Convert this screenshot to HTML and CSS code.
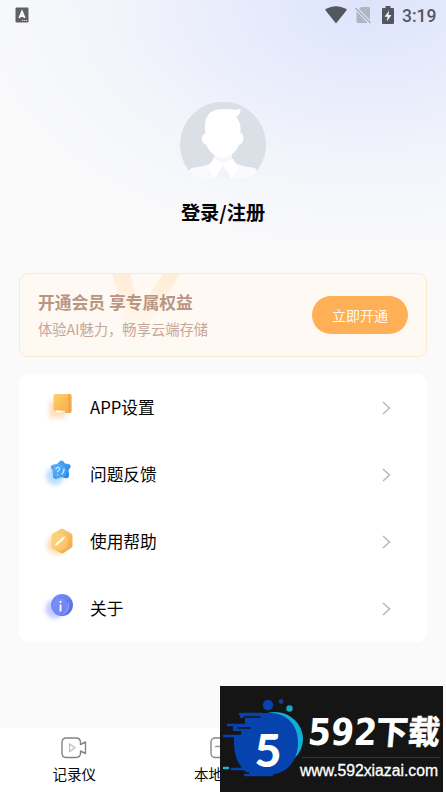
FILE: index.html
```html
<!DOCTYPE html>
<html lang="zh-CN">
<head>
<meta charset="utf-8">
<meta name="viewport" content="width=device-width, initial-scale=1">
<title>登录/注册</title>
<link rel="stylesheet" href="styles.css">
</head>
<body>
<div class="screen">
  <header class="status">
    <svg class="app-badge" width="14" height="16" viewBox="0 0 14 16"><rect x=".5" y=".5" width="13" height="15" rx="1.2" fill="#606167"/><path d="M4.3 11 7 4.6 9.700 11M5.200 9h3.600" fill="none" stroke="#fff" stroke-width="1.800"/><path d="M7 13.500h5" stroke="#ddd" stroke-width="1" stroke-dasharray="1.200 .7"/></svg>
    <div class="status-right">
      <svg class="wifi" width="22" height="18" viewBox="0 0 22 18"><path d="M0 3.800C6-1 16-1 22 3.800L11 17.500z" fill="#55575f"/></svg>
      <svg class="sim" width="16" height="18" viewBox="0 0 16 18"><path d="M6 1h8q1 0 1 1v12L4 3zM1.500 5.300 12.800 17H2.500q-1 0-1-1z" fill="#b2b5c1"/><path d="m.5 2 15 15" stroke="#a5a8b5" stroke-width="1.300"/></svg>
      <svg class="battery" width="12" height="18" viewBox="0 0 12 18"><path d="M3.500 0h5v2H11q1 0 1 1v14q0 1-1 1H1q-1 0-1-1V3q0-1 1-1h2.500z" fill="#55575f"/><path d="M7.200 4.500 2.500 10.700h3L4.800 15.500 9.500 9h-3z" fill="#eef0fc"/></svg>
      <span class="clock">3:19</span>
    </div>
  </header>

  <section class="profile">
    <svg class="avatar" width="86" height="86" viewBox="0 0 86 86">
      <defs>
        <linearGradient id="body" x2="0" y2="1"><stop offset="0" stop-color="#fdfdfe"/><stop offset="1" stop-color="#f8f9fc"/></linearGradient>
      </defs>
      <path d="M9 69A43 43 0 1 1 77 69z" fill="#dae0e6"/>
      <path d="M9 69C10 66 13 65.500 17 65C28 63.500 34 61 34 56V48H52V56C52 61 59 63.500 69 65C73 65.500 76 66 77 69L71 76H15z" fill="url(#body)"/>
      <path d="m34 56-6 9 6 12 9-14zm18 0 6 9-6 12-9-14z" fill="#fff"/>
      <path d="m35 76 8-13 8 13z" fill="#f2f4f9"/>
      <path d="M34 50q9 8 18 0v6q-9 9-18 0z" fill="#f6f7f9"/>
      <path d="M25.500 31C23 12 31 7 45 7C51 7 55 8.500 60.500 7C61 11 58 14 56 15C60 19 61 25 60.500 31C65 32 64.500 41 59 43C56 50 50 55 43 56C35 55 29 50 26.500 43C20.500 41 20.500 33 25.500 31z" fill="#fff"/>
    </svg>
    <h1 class="login">登录/注册</h1>
  </section>

  <section class="vip">
    <svg class="vip-mark" width="70" height="60" viewBox="0 0 70 60"><defs><linearGradient id="vee" x2="0" y2="1"><stop stop-color="#ffecd6"/><stop offset="1" stop-color="#fff9f2"/></linearGradient></defs><path d="M0 0H18L28 34 51 0H68L31 60H18z" fill="url(#vee)"/></svg>
    <div class="vip-text">
      <h2>开通会员 享专属权益</h2>
      <p>体验AI魅力，畅享云端存储</p>
    </div>
    <button class="open" type="button">立即开通</button>
  </section>

  <nav class="menu">
    <a class="row">
      <svg class="icon" width="36" height="36" viewBox="0 0 36 36">
        <defs><linearGradient id="book" x2="1" y2="1"><stop stop-color="#ffd168"/><stop offset="1" stop-color="#f6a64b"/></linearGradient><filter id="soft" x="-50%" y="-50%" width="200%" height="200%"><feGaussianBlur stdDeviation="2.200"/></filter></defs>
        <rect x="8" y="11" width="17" height="17" rx="3" fill="#ffc9a0" opacity=".6" filter="url(#soft)"/>
        <rect x="12.500" y="4" width="18" height="19" rx="2" fill="url(#book)"/><path d="M27 4h2q1.500 0 1.500 2v15q0 2-3.500 2z" fill="#ec9d50" opacity=".55"/><path d="M10 20.500h14V24H12q-2 0-2-3.500z" fill="#ffe0b5"/><path d="M15 21.500h5.500" stroke="#fff" stroke-width="1.600"/>
      </svg>
      <span class="label">APP设置</span><svg class="chev" width="9" height="14" viewBox="0 0 9 14"><path d="m1 1 6.500 6L1 13"/></svg>
    </a>
    <a class="row">
      <svg class="icon" width="36" height="36" viewBox="0 0 36 36">
        <defs><linearGradient id="star" x2="1" y2="1"><stop stop-color="#4eb3fa"/><stop offset="1" stop-color="#287cec"/></linearGradient></defs>
        <circle cx="14" cy="19" r="9" fill="#8fc8ff" opacity=".6" filter="url(#soft)"/>
        <path d="M18.500 4.500Q20.500 2.500 22.500 4.500L24 6.500 27.500 7Q31 8 29 11L27.500 13 28 18Q28 22 24 21L20 20 15 22Q12 22 12 19L12 14 10 11Q9 8 13 7.500L16 7z" fill="url(#star)"/>
        <circle cx="18" cy="14.500" r="7.500" fill="#6ebefa" opacity=".35"/>
        <path d="M15 12.500q.4-2.500 2.600-2 2.100 1 .2 2.700-1.400.8-1.300 2M16.500 17.200v1.200M23 11.500q0 4-2.500 6" fill="none" stroke="#c9e7ff" stroke-width="1.300"/>
      </svg>
      <span class="label">问题反馈</span><svg class="chev" width="9" height="14" viewBox="0 0 9 14"><path d="m1 1 6.500 6L1 13"/></svg>
    </a>
    <a class="row">
      <svg class="icon" width="36" height="36" viewBox="0 0 36 36">
        <defs><linearGradient id="hex" x2="1" y2="1"><stop stop-color="#ffdc85"/><stop offset="1" stop-color="#efa344"/></linearGradient></defs>
        <circle cx="15" cy="21" r="9.500" fill="#ffc990" opacity=".6" filter="url(#soft)"/>
        <path d="M19.500 5Q21 4.200 22.500 5L30.500 9.700Q31.500 10.500 31.500 12V21.500Q31.500 23 30.500 23.700L22.500 29Q21 30 19.500 29L11.500 24.200Q10.500 23.500 10.500 22V12Q10.500 10.500 11.500 9.700z" fill="url(#hex)"/>
        <circle cx="18.500" cy="18" r="8.500" fill="#ffd989" opacity=".4"/>
        <path d="M24 12Q20.500 13.500 18.500 16.300Q15 18 14 22Q17.500 20.800 19 18.500Q23 16 24 12z" fill="#fffbed"/>
      </svg>
      <span class="label">使用帮助</span><svg class="chev" width="9" height="14" viewBox="0 0 9 14"><path d="m1 1 6.500 6L1 13"/></svg>
    </a>
    <a class="row">
      <svg class="icon" width="36" height="36" viewBox="0 0 36 36">
        <defs><linearGradient id="info" x2="1" y2="1"><stop stop-color="#7c93ff"/><stop offset="1" stop-color="#5267df"/></linearGradient></defs>
        <circle cx="14" cy="18" r="9.500" fill="#a4adff" opacity=".65" filter="url(#soft)"/>
        <circle cx="21" cy="14" r="11" fill="url(#info)"/><circle cx="19.500" cy="16" r="8.500" fill="#8493ff" opacity=".5"/><path d="M27.500 12.500q.5 7-5 10.500" fill="none" stroke="#9dabff" stroke-width="1"/>
        <path d="M19.500 13.500v7" stroke="#fff" stroke-width="1.800"/><circle cx="19.500" cy="10.800" r="1.100" fill="#fff"/>
      </svg>
      <span class="label">关于</span><svg class="chev" width="9" height="14" viewBox="0 0 9 14"><path d="m1 1 6.500 6L1 13"/></svg>
    </a>
  </nav>

  <footer class="tabs">
    <a class="tab">
      <svg width="26" height="22" viewBox="0 0 26 22" fill="none"><path d="M5 1H15Q19.500 1 19.500 5.500V7.500L24.500 5V16.500L19.500 14V16Q19.500 20.500 15 20.500H5Q1 20.500 1 16V5.500Q1 1 5 1z" stroke="#858585" stroke-width="1.400" stroke-linejoin="round"/><path d="M8.500 7v7.500l5.500-3.700z" stroke="#bcbcbc" stroke-width="1.200"/></svg>
      <span>记录仪</span>
    </a>
    <a class="tab">
      <svg width="26" height="22" viewBox="0 0 26 22" fill="none"><rect x="1" y="1" width="23" height="19.500" rx="4" stroke="#858585" stroke-width="1.400"/><path d="M5 10q3-1.500 5 0" stroke="#999" stroke-width="1.300"/></svg>
      <span class="local">本地</span>
    </a>
    <div class="tab"></div>
  </footer>

  <aside class="promo">
    <svg width="223" height="106" viewBox="0 0 223 106">
      <ellipse cx="55" cy="53" rx="28" ry="27" fill="#12afd5"/>
      <path d="M20 27H52C68 28 78 40 78 56C78 75 67 89 47 89H29V86H26Q14 76 14 57V51H4V49H21V45H13V40H8V38H25V32H20z" fill="#0743ae"/>
      <path d="M20 28h22M8 39h27M4 50h19M12 83h31M25 89h27" stroke="#0743ae" stroke-width="2.500" stroke-linecap="round"/>
      <path d="M24 31h16M18 42h12" stroke="#151515" stroke-width="1.500" stroke-linecap="round"/>
      <path d="M4 82h4" stroke="#20b6d1" stroke-width="2.500" stroke-linecap="round"/>
      <circle cx="48" cy="19" r="5.200" fill="#0743ae"/><circle cx="61" cy="15.500" r="2.400" fill="#173b8e"/><circle cx="69.500" cy="22.500" r="3.200" fill="#16abc5"/>
      <text class="five" x="34.500" y="81" textLength="27" lengthAdjust="spacingAndGlyphs">5</text>
      <g transform="translate(87 59) skewX(-5)">
        <text class="brand-num" x="0" y="0" textLength="69" lengthAdjust="spacingAndGlyphs">592</text>
        <text class="brand-cn" x="68" y="-1" textLength="64" lengthAdjust="spacingAndGlyphs">下载</text>
      </g>
      <path d="M82 71.500H220" stroke="#343434"/>
      <text class="url" x="80" y="90" textLength="138" lengthAdjust="spacingAndGlyphs">www.592xiazai.com</text>
    </svg>
  </aside>
</div>
</body>
</html>
```
FILE: styles.css
```css
* { box-sizing: border-box; }
body { margin: 0; background: #fafafa; }
.screen {
  position: relative;
  width: 446px;
  height: 792px;
  overflow: hidden;
  display: flex;
  flex-direction: column;
  font-family: "Noto Sans CJK SC", sans-serif;
  color: #050505;
  background: radial-gradient(ellipse 420px 265px at 370px 0, #dce3fb 0%, #e8ecfb 33%, #f3f5fb 64%, rgba(250,250,250,0) 100%), #fafafa;
}
.status {
  height: 32px;
  flex: none;
  padding: 0 10px 0 15px;
  display: flex;
  align-items: center;
  justify-content: space-between;
}
.app-badge { margin-bottom: 3px; }
.status-right { display: flex; align-items: center; padding-bottom: 2px; }
.wifi { margin-right: 8px; }
.sim { margin-right: 11px; }
.battery { margin-right: 8px; }
.clock { font: 500 17.5px/28px Roboto, sans-serif; color: #55575f; width: 34px; white-space: nowrap; padding-top: 2px; }
.profile { height: 241px; flex: none; padding-top: 70px; display: flex; flex-direction: column; align-items: center; }
.avatar { display: block; }
.login { margin: 10px 0 0; font-size: 19.2px; line-height: 28px; font-weight: 700; }
.vip {
  position: relative;
  flex: none;
  height: 84px;
  margin: 0 19px;
  padding: 0 18px;
  border: 1.5px solid #fce9d2;
  border-radius: 9px;
  background: #fff9f3;
  overflow: hidden;
  display: flex;
  align-items: center;
  justify-content: space-between;
}
.vip-mark { position: absolute; left: 92px; top: 0; }
.vip-text { position: relative; padding-bottom: 2px; }
.vip h2 { margin: 0; font-size: 16.8px; line-height: 28px; font-weight: 700; color: #b99582; white-space: nowrap; }
.vip p { margin: 0; font-size: 14.3px; line-height: 25px; color: #c6a799; white-space: nowrap; }
.open { width: 96px; height: 38px; border: 0; border-radius: 19px; padding: 0; background: #ffb057; color: #fffaf0; font: 14px/38px "Noto Sans CJK SC", sans-serif; }
.menu { flex: none; height: 268px; margin: 17px 19px 0; background: #fff; border-radius: 10px; display: grid; grid-template-rows: repeat(4, 67px); }
.row { display: flex; align-items: center; padding: 0 36px 0 22px; }
.icon { margin-right: 13px; flex: none; }
.label { flex: 1; font-size: 16.7px; line-height: 26px; padding-bottom: 2px; }
.chev { fill: none; stroke: #b9b9b9; stroke-width: 1.5; }
.tabs { flex: none; height: 64px; margin-top: auto; background: #fff; display: grid; grid-template-columns: repeat(3, 1fr); }
.tab { display: flex; flex-direction: column; align-items: center; padding-top: 9px; font-size: 14.5px; line-height: 22px; }
.tab span { margin-top: 4px; }
.tab .local { width: 58px; }
.promo { position: absolute; left: 220px; top: 686px; width: 223px; height: 106px; background: #151515; }
.promo svg { display: block; }
.promo text { fill: #fff; }
.five { font: 900 46px Lato, sans-serif; }
.brand-num { font: 700 37px "DejaVu Sans", sans-serif; }
.brand-cn { font: 700 33px "Noto Sans CJK SC", sans-serif; stroke: #fff; stroke-width: .7px; }
.url { font: 16px "Liberation Sans", sans-serif; stroke: #fff; stroke-width: .3px; }
```
